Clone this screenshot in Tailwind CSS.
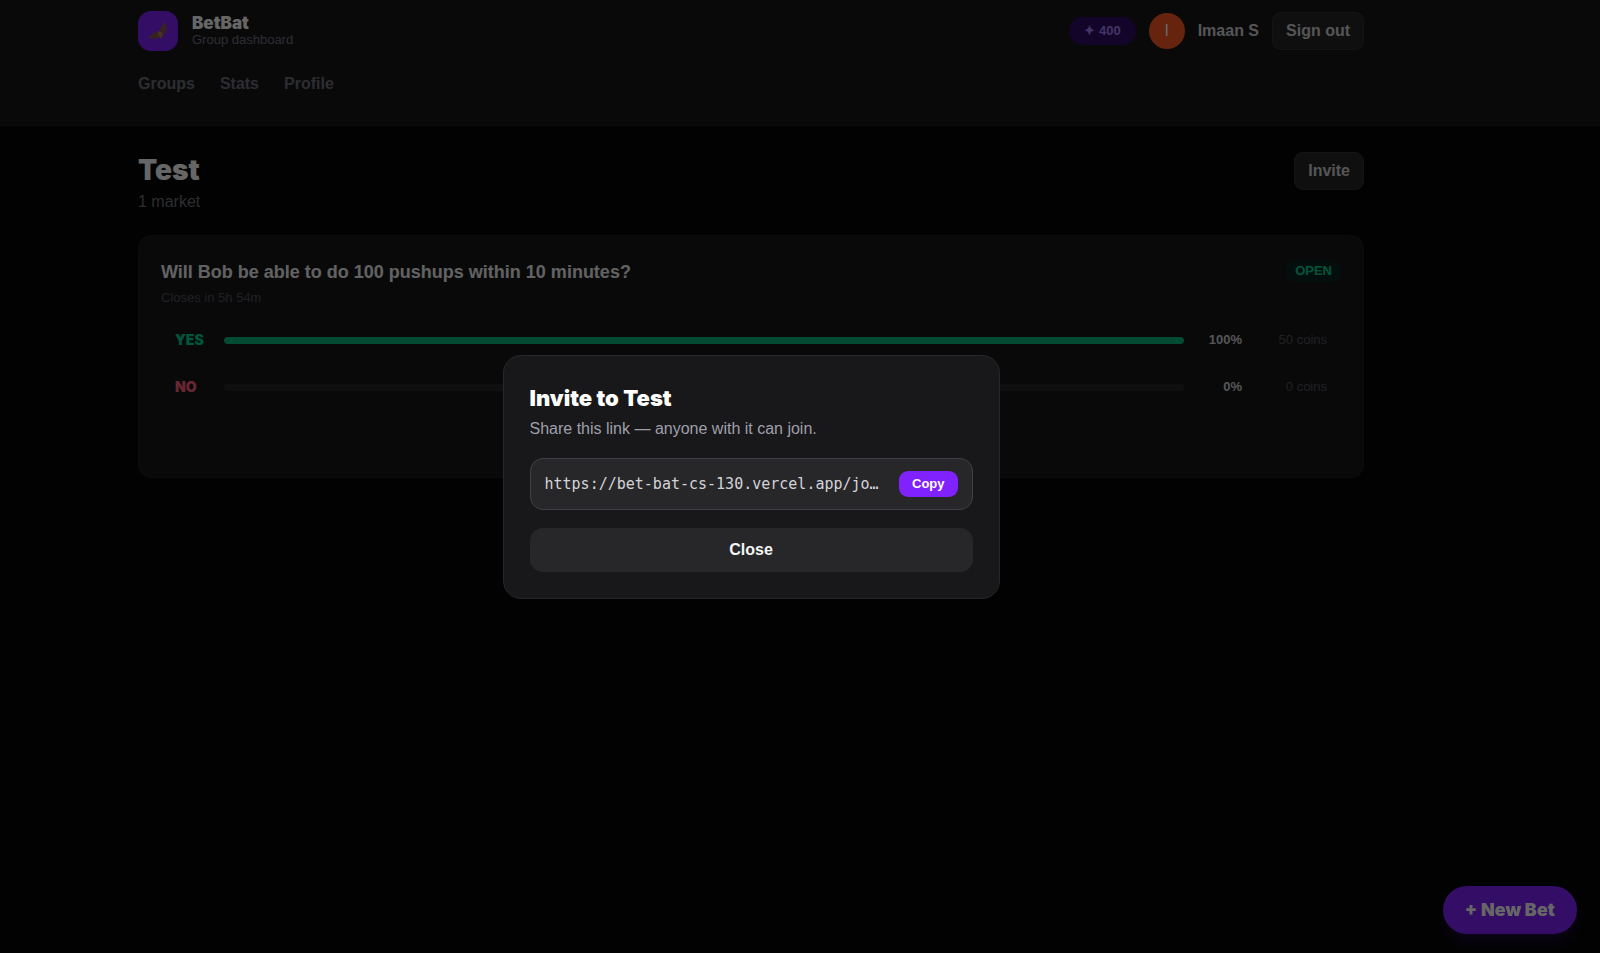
<!DOCTYPE html>
<html lang="en">
<head>
<meta charset="utf-8">
<meta name="viewport" content="width=device-width, initial-scale=1">
<title>BetBat</title>
<script src="https://cdn.jsdelivr.net/npm/@tailwindcss/browser@4"></script>
</head>
<body class="min-h-screen bg-[#060607] font-['Liberation_Sans',Arial,sans-serif] text-[16px] leading-[22px] text-white">

<header class="border-b border-zinc-800/60 bg-zinc-900 pr-[98px]">
  <div class="mx-auto max-w-[1226px] pt-[11px] pb-[30px]">
    <div class="flex items-center justify-between">
      <a href="#" class="flex items-center gap-[14px]">
        <span class="flex size-10 items-center justify-center rounded-[13px] bg-violet-600">
          <svg class="size-6" viewBox="0 0 24 24" aria-hidden="true">
            <path fill="#8d5a4e" d="M2 19.500C4 16 7 13.500 11 13.200L12 11.500L13.500 12.200C15 9 16.500 5.500 18.500 2.500C18.500 5 20.500 6.500 21 9.500C20 10.500 20.500 12 20 14L17.500 14.500C18 17 16.500 19 14.500 20L12.500 18.500L9.500 20L8 18.700L5.500 20L4.500 18.800Z"/>
            <path fill="#b37a68" d="M12 12.500L15 13L17 15.500L14.500 19L12.500 16.500Z"/>
          </svg>
        </span>
        <span class="flex flex-col">
          <span class="font-['Inter'] text-[17px] leading-[18px] font-black">BetBat</span>
          <span class="text-[13px] leading-[16px] text-zinc-500">Group dashboard</span>
        </span>
      </a>
      <div class="flex items-center gap-[13px]">
        <span class="rounded-full bg-violet-950 px-[15px] py-[5px] text-[13px] leading-[18px] font-bold text-violet-400">✦ 400</span>
        <span class="flex size-9 items-center justify-center rounded-full bg-[#ff5722]">I</span>
        <span class="font-bold text-zinc-300">Imaan S</span>
        <button class="rounded-[9px] border border-zinc-700/50 bg-zinc-800 px-[13px] py-[7px] font-bold text-zinc-300">Sign out</button>
      </div>
    </div>
    <nav class="mt-[22px] flex gap-[25px] font-bold text-zinc-500">
      <a href="#">Groups</a>
      <a href="#">Stats</a>
      <a href="#">Profile</a>
    </nav>
  </div>
</header>

<main class="pt-[26px] pr-[98px]">
  <div class="mx-auto max-w-[1226px]">
    <div class="flex items-start justify-between">
      <div>
        <h1 class="font-['Inter'] text-[28px] leading-[36px] font-black">Test</h1>
        <p class="mt-[3px] text-zinc-500">1 market</p>
      </div>
      <button class="rounded-[9px] border border-zinc-700/50 bg-zinc-800 px-[13px] py-[7px] font-bold text-zinc-300">Invite</button>
    </div>

    <article class="mt-[22px] rounded-[14px] border border-zinc-800/40 bg-zinc-900 px-[22px] pt-[24px] pb-[68px]">
      <div class="flex items-start justify-between">
        <div>
          <h2 class="text-[18px] leading-[24px] font-bold text-zinc-100">Will Bob be able to do 100 pushups within 10 minutes?</h2>
          <p class="mt-[5px] text-[13px] leading-[18px] text-zinc-600">Closes in 5h 54m</p>
        </div>
        <span class="rounded-full bg-emerald-950/60 px-[9px] py-[2px] text-[13px] leading-[18px] font-bold text-emerald-400">OPEN</span>
      </div>
      <div class="mt-[11px] flex flex-col gap-[3px] px-[14px]">
        <div class="flex h-11 items-center text-[13px]">
          <span class="w-[49px] font-['Inter'] text-[14px] font-black text-emerald-400">YES</span>
          <span class="h-[7px] flex-1 overflow-hidden rounded-full bg-zinc-800"><span class="block h-full rounded-full bg-emerald-500" style="width:100%"></span></span>
          <span class="w-[58px] text-right font-bold text-zinc-300">100%</span>
          <span class="w-[85px] text-right text-zinc-600">50 coins</span>
        </div>
        <div class="flex h-11 items-center text-[13px]">
          <span class="w-[49px] font-['Inter'] text-[14px] font-black text-rose-400">NO</span>
          <span class="h-[7px] flex-1 overflow-hidden rounded-full bg-zinc-800"><span class="block h-full rounded-full bg-rose-500" style="width:0%"></span></span>
          <span class="w-[58px] text-right font-bold text-zinc-300">0%</span>
          <span class="w-[85px] text-right text-zinc-600">0 coins</span>
        </div>
      </div>
    </article>
  </div>
</main>

<button class="fixed right-[23px] bottom-[19px] rounded-full bg-violet-600 px-[22px] py-[13px] font-['Inter'] text-[18px] leading-[22px] font-black shadow-lg shadow-violet-600/20">+ New Bet</button>

<div class="fixed inset-0 flex items-center justify-center bg-black/60 pr-[98px]">
  <section role="dialog" aria-modal="true" aria-labelledby="invite-title" class="w-[497px] rounded-[18px] border border-zinc-800 bg-zinc-900 p-[26px]">
    <h2 id="invite-title" class="font-['Inter'] text-[22px] leading-[32px] font-black">Invite to Test</h2>
    <p class="mt-[4px] text-zinc-400">Share this link — anyone with it can join.</p>
    <div class="mt-[18px] flex items-center gap-[9px] rounded-[13px] border border-zinc-700 bg-zinc-800 px-[14px] py-[12px]">
      <span class="min-w-0 flex-1 truncate font-['DejaVu_Sans_Mono',monospace] text-[15px] leading-[26px] text-zinc-300">https://bet-bat-cs-130.vercel.app/jo…</span>
      <button class="rounded-[9px] bg-violet-600 px-[13px] py-[4px] text-[13px] leading-[18px] font-bold">Copy</button>
    </div>
    <button class="mt-[18px] w-full rounded-[13px] bg-zinc-800 py-[11px] font-bold text-zinc-100">Close</button>
  </section>
</div>
</body>
</html>
